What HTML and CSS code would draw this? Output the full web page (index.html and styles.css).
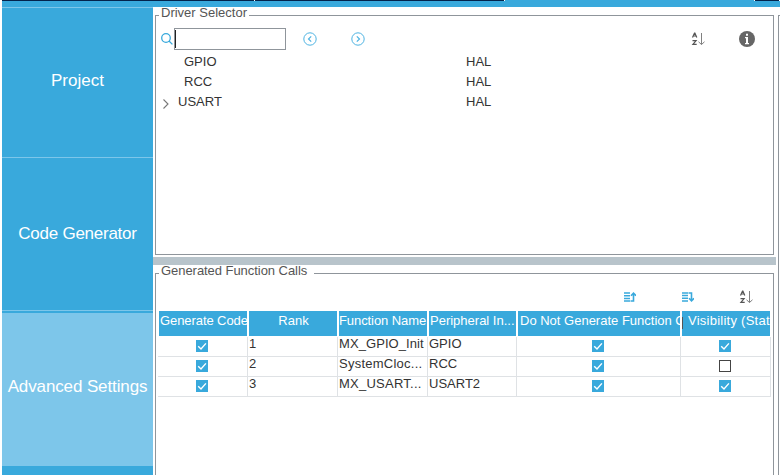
FILE: index.html
```html
<!DOCTYPE html>
<html lang="en">
<head>
<meta charset="utf-8">
<title>Project Manager</title>
<link rel="stylesheet" href="styles.css">
</head>
<body>
<svg class="defs" width="0" height="0">
  <symbol id="az" viewBox="0 0 14 14">
    <g fill="none" stroke="#555" stroke-width="1.2">
      <path d="M1.500 5.500 3.500 1h.4L5.800 5.500M2.200 4h3"/>
      <path d="M1.500 8.600h3.600L1.900 12.400h3.800"/>
    </g>
    <path d="M10.500 1v11.500M7.500 9.800l3 2.700 3-2.700" fill="none" stroke="#808080" stroke-width="1"/>
  </symbol>
  <symbol id="check" viewBox="0 0 12 12">
    <rect width="12" height="12" fill="#39a9dc"/>
    <path d="M2.200 6.200 5 9l4.900-5.600" fill="none" stroke="#fff" stroke-width="1.400"/>
  </symbol>
</svg>
<div class="app">
  <div class="tabs"><i class="dark"></i><i class="dark"></i><i class="current"></i><i class="dark"></i></div>
  <div class="main">
    <nav class="sidebar">
      <div class="item"><span class="t-project">Project</span></div>
      <div class="item"><span class="t-code">Code Generator</span></div>
      <div class="item active"><span class="t-adv">Advanced Settings</span></div>
    </nav>
    <div class="content">
      <section class="panel drivers">
        <h2>Driver Selector</h2>
        <div class="toolbar search">
          <svg width="12" height="12" viewBox="0 0 12 12" fill="none" stroke="#39a9dc" stroke-width="1.300"><circle cx="5" cy="5" r="4.300"/><path d="m8 8 3.400 3.400"/></svg>
          <div class="field"><i></i></div>
          <svg class="prev" width="14" height="14" viewBox="0 0 14 14" fill="none" stroke="#4db3e2"><circle cx="7" cy="7" r="6.200"/><path d="M8.200 4.300 5.500 7l2.700 2.700" stroke-width="1.200"/></svg>
          <svg class="next" width="14" height="14" viewBox="0 0 14 14" fill="none" stroke="#4db3e2"><circle cx="7" cy="7" r="6.200"/><path d="M5.800 4.300 8.500 7 5.800 9.700" stroke-width="1.200"/></svg>
          <svg class="sort" width="14" height="14"><use href="#az"/></svg>
          <svg class="info" width="16" height="16" viewBox="0 0 16 16"><circle cx="8" cy="8" r="8" fill="#666"/><path d="M7 2.700h2v2H7zM6 6h3v6h1v1.300H6V12h1V7.200H6z" fill="#fff"/></svg>
        </div>
        <div class="tree">
          <div class="node"><span class="label">GPIO</span><span>HAL</span></div>
          <div class="node"><span class="label">RCC</span><span>HAL</span></div>
          <div class="node parent"><svg width="8" height="12" viewBox="0 0 8 12"><path d="m1.500 1.500 4.500 4.500-4.500 4.500" fill="none" stroke="#777" stroke-width="1.100"/></svg><span class="label">USART</span><span>HAL</span></div>
        </div>
      </section>
      <div class="splitter"></div>
      <section class="panel calls">
        <h2>Generated Function Calls</h2>
        <div class="toolbar order">
          <svg width="12" height="10" viewBox="0 0 12 10" fill="none" stroke="#39a9dc"><path d="M0 1h6M0 3.700h6M0 6.400h6M0 9.100h6" stroke-width="1.500"/><path d="M6.500 9h3V1M7 3.700 9.500 1.200 12 3.700" stroke-width="1.600"/></svg>
          <svg width="12" height="10" viewBox="0 0 12 10" fill="none" stroke="#39a9dc"><path d="M0 .9h6M0 3.600h6M0 6.300h6M0 9h6" stroke-width="1.500"/><path d="M6.500 1h3v8M7 6.300l2.500 2.500L12 6.300" stroke-width="1.600"/></svg>
          <svg class="az" width="14" height="14"><use href="#az"/></svg>
        </div>
        <div class="table">
          <div class="row head">
            <div class="c1">Generate Code</div><div class="c2">Rank</div><div class="c3">Function Name</div><div class="c4">Peripheral In...</div><div class="c5">Do Not Generate Function C</div><div class="c6"><i></i>Visibility (Stat</div>
          </div>
          <div class="row"><div class="box"><svg width="12" height="12"><use href="#check"/></svg></div><div>1</div><div class="fn1">MX_GPIO_Init</div><div>GPIO</div><div class="box"><svg width="12" height="12"><use href="#check"/></svg></div><div class="box"><svg width="12" height="12"><use href="#check"/></svg></div></div>
          <div class="row"><div class="box"><svg width="12" height="12"><use href="#check"/></svg></div><div>2</div><div class="fn2">SystemCloc...</div><div>RCC</div><div class="box"><svg width="12" height="12"><use href="#check"/></svg></div><div class="box"><i class="empty"></i></div></div>
          <div class="row"><div class="box"><svg width="12" height="12"><use href="#check"/></svg></div><div>3</div><div class="fn3">MX_USART...</div><div>USART2</div><div class="box"><svg width="12" height="12"><use href="#check"/></svg></div><div class="box"><svg width="12" height="12"><use href="#check"/></svg></div></div>
        </div>
      </section>
    </div>
    <div class="next-panel"></div>
  </div>
</div>
</body>
</html>
```

FILE: styles.css
```css
* { box-sizing: border-box; }
body { margin: 0; background: #fff; font: 13px/20px "Liberation Sans", Arial, sans-serif; color: #333; }
svg { display: block; flex: none; }
.defs { position: absolute; }
.app { width: 780px; height: 475px; overflow: hidden; padding-left: 2px; display: flex; flex-direction: column; }
.tabs { height: 7px; flex: none; display: grid; grid-template-columns: 253px 250px 250px 25px; background: #39a9dc; }
.tabs i { height: 1px; }
.tabs .dark { background: #03234b; border-right: 1px solid #fff; }
.tabs .current { border-right: 1px solid #fff; }
.main { display: flex; height: 468px; }
.sidebar { width: 151px; background: #39a9dc; }
.item { height: 150px; border-top: 1px solid #7dc6ea; color: #fff; font-size: 17px; display: flex; align-items: center; justify-content: center; white-space: nowrap; padding-bottom: 4px; }
.item + .item { height: 153px; padding: 0; }
.item + .item.active { height: 156px; background: linear-gradient(#39a9dc 2px, #7dc6ea 2px); padding-bottom: 4px; }
.t-code { letter-spacing: -0.25px; }
.t-adv { letter-spacing: -0.12px; }
.content { width: 623px; }
.panel { margin-left: 2px; width: 619px; border: 1px solid #8f959b; }
.drivers { margin-top: 8px; height: 240px; }
.calls { margin-top: 8px; height: 230px; }
h2 { margin: -8px 0 0 3px; padding: 0 2px; height: 12px; background: #fff; font-size: 13px; font-weight: 400; color: #555; white-space: nowrap; }
.drivers h2 { line-height: 9px; width: 90px; }
.calls h2 { line-height: 9px; width: 155px; letter-spacing: -0.05px; }
.toolbar { display: flex; align-items: center; }
.search { height: 24px; margin-top: 7px; padding-left: 5px; }
.field { margin-left: 1px; width: 112px; height: 22px; border: 1px solid #8f959b; padding: 1px 0 0; }
.field i { display: block; width: 1px; height: 18px; background: #222; }
.prev { margin-left: 17px; }
.next { margin-left: 34px; }
.sort { margin-left: 326px; }
.info { margin-left: 34px; }
.tree { padding-top: 1px; }
.node { height: 20px; padding-left: 28px; display: flex; }
.node .label { width: 282px; }
.parent { padding-left: 6px; }
.parent svg { margin: 6px 8px 0 0; }
.parent .label { width: 288px; }
.splitter { margin-top: 2px; height: 8px; background: #b8c4cb; }
.order { margin-top: 9px; height: 20px; padding-left: 468px; gap: 46px; }
.order .az { margin-left: -1px; }
.table { margin: 4px 0 0 2px; }
.row { display: grid; grid-template-columns: 90px 90px 90px 89px 164px 90px; height: 20px; border-bottom: 1px solid #dfe2e5; width: 613px; }
.row > div { padding-left: 1px; border-right: 1px solid #dfe2e5; line-height: 14px; white-space: nowrap; overflow: hidden; }
.row > .box { display: flex; justify-content: center; align-items: flex-start; padding: 3px 1px 0 0; }
.row.head { height: 25px; border: 0; margin: 0 0 1px 1px; width: 611px; grid-template-columns: 88px 88px 88px 87px 162px 88px; gap: 2px; }
.head > div { background: #39a9dc; color: #fff; border: 0; line-height: 20px; }
.head > .c1, .head > .c3 { letter-spacing: -0.08px; }
.head > .c3 { padding-left: 0; }
.head > .c2 { text-align: center; }
.head > .c5 { padding-left: 2px; }
.head > .c6 { display: flex; padding-left: 0; letter-spacing: 0.25px; }
.c6 i { width: 1px; height: 12px; margin: 6px 5px 0 0; background: #555; }
.fn1 { letter-spacing: 0.08px; }
.fn2, .fn3 { letter-spacing: 0.25px; }
.empty { width: 12px; height: 12px; border: 1px solid #444; }
.next-panel { margin: 8px 0 0 2px; width: 2px; flex: none; border: solid #8f959b; border-width: 1px 0 0 1px; }
```
